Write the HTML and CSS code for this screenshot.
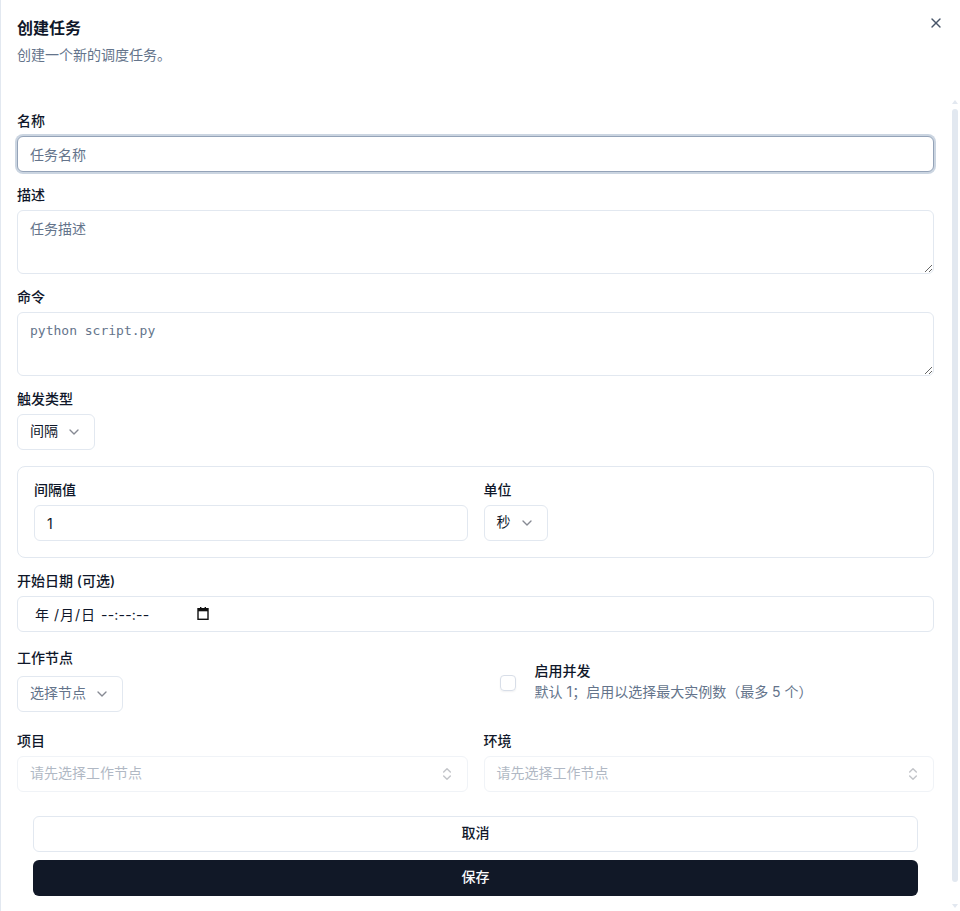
FILE: index.html
```html
<!DOCTYPE html>
<html lang="zh-CN">
<head>
<meta charset="utf-8">
<title>创建任务</title>
<link rel="stylesheet" href="styles.css">
</head>
<body>
<div class="dialog" role="dialog" aria-labelledby="dlg-title">
  <header class="dialog-header">
    <div class="heading">
      <h2 id="dlg-title" class="title">创建任务</h2>
      <p class="subtitle">创建一个新的调度任务。</p>
    </div>
    <button class="close" type="button" aria-label="关闭">
      <svg width="16" height="16" viewBox="0 0 24 24" fill="none" stroke="currentColor" stroke-width="2" stroke-linecap="round" stroke-linejoin="round"><path d="M18 6 6 18"/><path d="m6 6 12 12"/></svg>
    </button>
  </header>

  <div class="dialog-body">
    <div class="scroll-view">
      <form class="form">
        <div class="field">
          <label class="label" for="name">名称</label>
          <input id="name" class="input is-focused" type="text" placeholder="任务名称" autofocus>
        </div>

        <div class="field">
          <label class="label" for="desc">描述</label>
          <textarea id="desc" class="textarea" placeholder="任务描述"></textarea>
        </div>

        <div class="field">
          <label class="label" for="cmd">命令</label>
          <textarea id="cmd" class="textarea mono" placeholder="python script.py"></textarea>
        </div>

        <div class="field">
          <span class="label">触发类型</span>
          <button type="button" class="select">
            <span>间隔</span>
            <svg class="chev" width="16" height="16" viewBox="0 0 24 24" fill="none" stroke="currentColor" stroke-width="2" stroke-linecap="round" stroke-linejoin="round"><path d="m6 9 6 6 6-6"/></svg>
          </button>
        </div>

        <div class="card">
          <div class="field">
            <label class="label" for="interval">间隔值</label>
            <input id="interval" class="input" type="text" value="1">
          </div>
          <div class="field">
            <span class="label">单位</span>
            <button type="button" class="select">
              <span>秒</span>
              <svg class="chev" width="16" height="16" viewBox="0 0 24 24" fill="none" stroke="currentColor" stroke-width="2" stroke-linecap="round" stroke-linejoin="round"><path d="m6 9 6 6 6-6"/></svg>
            </button>
          </div>
        </div>

        <div class="field">
          <span class="label">开始日期 (可选)</span>
          <div class="input date">
            <span class="date-part">年</span><span class="date-sep"> /</span><span class="date-part">月</span><span class="date-sep">/</span><span class="date-part">日</span><span class="date-time">--:--:--</span>
            <svg class="cal" width="12" height="13" viewBox="0 0 12 13"><rect x="1" y="1.7" width="10" height="10.6" fill="none" stroke="#111" stroke-width="1.4"/><rect x="1" y="1.7" width="10" height="2.6" fill="#111"/><rect x="3" y="0" width="1.4" height="2" fill="#111"/><rect x="7.6" y="0" width="1.4" height="2" fill="#111"/></svg>
          </div>
        </div>

        <div class="row">
          <div class="field">
            <span class="label tall">工作节点</span>
            <button type="button" class="select muted">
              <span>选择节点</span>
              <svg class="chev" width="16" height="16" viewBox="0 0 24 24" fill="none" stroke="currentColor" stroke-width="2" stroke-linecap="round" stroke-linejoin="round"><path d="m6 9 6 6 6-6"/></svg>
            </button>
          </div>
          <div class="toggle">
            <span class="checkbox" role="checkbox" aria-checked="false"></span>
            <div class="toggle-text">
              <span class="toggle-title">启用并发</span>
              <span class="toggle-desc">默认 1；启用以选择最大实例数（最多 5 个）</span>
            </div>
          </div>
        </div>

        <div class="row">
          <div class="field">
            <span class="label">项目</span>
            <button type="button" class="select wide" disabled>
              <span>请先选择工作节点</span>
              <svg class="chev" width="16" height="16" viewBox="0 0 24 24" fill="none" stroke="currentColor" stroke-width="2" stroke-linecap="round" stroke-linejoin="round"><path d="m7 15 5 5 5-5"/><path d="m7 9 5-5 5 5"/></svg>
            </button>
          </div>
          <div class="field">
            <span class="label">环境</span>
            <button type="button" class="select wide" disabled>
              <span>请先选择工作节点</span>
              <svg class="chev" width="16" height="16" viewBox="0 0 24 24" fill="none" stroke="currentColor" stroke-width="2" stroke-linecap="round" stroke-linejoin="round"><path d="m7 15 5 5 5-5"/><path d="m7 9 5-5 5 5"/></svg>
            </button>
          </div>
        </div>

        <div class="actions">
          <button type="button" class="btn btn-outline">取消</button>
          <button type="submit" class="btn btn-primary">保存</button>
        </div>
      </form>
    </div>

    <div class="scrollbar" aria-hidden="true">
      <span class="sb-arrow sb-up"></span>
      <span class="sb-thumb"></span>
      <span class="sb-arrow sb-down"></span>
    </div>
  </div>
</div>
</body>
</html>
```

FILE: styles.css
```css
* {
  box-sizing: border-box;
}

html, body {
  margin: 0;
  height: 100%;
  background: #ffffff;
}

body {
  font-family: "Inter", "Noto Sans CJK SC", sans-serif;
  color: #0f172a;
  font-size: 14px;
}

.dialog {
  height: 911px;
  display: flex;
  flex-direction: column;
  border-left: 1px solid #e2e8f0;
  background: #ffffff;
  overflow: hidden;
}

/* header */
.dialog-header {
  display: flex;
  justify-content: space-between;
  align-items: flex-start;
  padding: 16px 16px 32px 16px;
  flex: none;
}

.title {
  margin: 0;
  font-size: 16px;
  line-height: 24px;
  font-weight: 700;
}

.subtitle {
  margin: 5px 0 0;
  font-size: 14px;
  line-height: 20px;
  color: #64748b;
}

.close {
  margin-top: -1px;
  width: 16px;
  height: 16px;
  padding: 0;
  border: 0;
  background: none;
  color: #475569;
  display: flex;
  cursor: pointer;
}

/* scrolling body: content column + slim scrollbar rail */
.dialog-body {
  flex: 1;
  min-height: 0;
  display: flex;
  overflow: hidden;
}

.scroll-view {
  flex: 1;
  min-width: 0;
  overflow: hidden;
  padding: 17px 15px 0 16px;
}

.scrollbar {
  flex: none;
  width: 11px;
  display: flex;
  flex-direction: column;
  align-items: center;
  padding: 3px 0 3px;
}

.sb-arrow {
  width: 0;
  height: 0;
  border-left: 3px solid transparent;
  border-right: 3px solid transparent;
}

.sb-up {
  border-bottom: 4px solid #e2e8f0;
}

.sb-down {
  margin-top: auto;
  border-top: 4px solid #e2e8f0;
}

.sb-thumb {
  margin-top: 5px;
  width: 6px;
  height: 773px;
  border-radius: 3px;
  background: #e2e8f0;
}

.form {
  display: flex;
  flex-direction: column;
  gap: 16px;
}

.field {
  display: flex;
  flex-direction: column;
  gap: 8px;
  min-width: 0;
}

.label {
  font-size: 14px;
  line-height: 14px;
  font-weight: 500;
  color: #0f172a;
}

.label.tall {
  line-height: 20px;
}

.input {
  height: 36px;
  width: 100%;
  border: 1px solid #e2e8f0;
  border-radius: 6px;
  padding: 0 12px;
  font: inherit;
  font-size: 14px;
  color: #0f172a;
  background: #ffffff;
  outline: none;
}

.input::placeholder,
.textarea::placeholder {
  color: #64748b;
  opacity: 1;
}

.input.is-focused {
  border-color: #94a3b8;
  box-shadow: 0 0 0 2px #cbd5e1;
}

.textarea {
  height: 64px;
  width: 100%;
  border: 1px solid #e2e8f0;
  border-radius: 6px;
  padding: 8px 12px;
  font: inherit;
  font-size: 14px;
  line-height: 20px;
  color: #0f172a;
  background: #ffffff;
  outline: none;
  resize: vertical;
  display: block;
}

.textarea.mono {
  font-family: "DejaVu Sans Mono", monospace;
  font-size: 13px;
}

/* select trigger */
.select {
  align-self: flex-start;
  height: 36px;
  display: inline-flex;
  align-items: center;
  gap: 8px;
  padding: 0 12px 2px;
  border: 1px solid #e2e8f0;
  border-radius: 6px;
  background: #ffffff;
  font: inherit;
  font-size: 14px;
  line-height: 20px;
  color: #0f172a;
  cursor: pointer;
}

.select .chev {
  margin-top: 2px;
}

.select.muted span {
  color: #64748b;
}

.select .chev {
  opacity: 0.5;
  flex: none;
}

.select.wide {
  align-self: stretch;
  justify-content: space-between;
}

.select.wide span {
  color: #64748b;
}

.select:disabled {
  opacity: 0.5;
  cursor: not-allowed;
}

/* interval card */
.card {
  border: 1px solid #e2e8f0;
  border-radius: 8px;
  padding: 16px;
  display: grid;
  grid-template-columns: 1fr 1fr;
  gap: 16px;
}

/* date-time field */
.date {
  display: flex;
  align-items: center;
  padding-left: 17px;
}

.date-sep {
  white-space: pre;
  margin: 0 1px;
}

.date-time {
  margin-left: 6px;
  letter-spacing: 0.2px;
}

.cal {
  margin-left: 48px;
  margin-top: -1px;
}

/* two-column rows */
.row {
  display: grid;
  grid-template-columns: 1fr 1fr;
  gap: 16px;
  align-items: start;
}

.toggle {
  display: flex;
  align-items: center;
  gap: 19px;
  padding: 16px;
}

.checkbox {
  width: 16px;
  height: 16px;
  border: 1px solid #d8dee8;
  border-radius: 4px;
  box-shadow: 0 1px 2px rgba(15, 23, 42, 0.06);
  flex: none;
}

.toggle-text {
  display: flex;
  flex-direction: column;
  gap: 4px;
}

.toggle-title {
  font-weight: 500;
  line-height: 14px;
}

.toggle-desc {
  line-height: 20px;
  color: #64748b;
}

/* footer buttons */
.actions {
  display: flex;
  flex-direction: column;
  gap: 8px;
  padding: 8px 16px 35px;
}

.btn {
  height: 36px;
  border-radius: 6px;
  font: inherit;
  font-size: 14px;
  font-weight: 500;
  line-height: 20px;
  padding: 0 0 3px;
  cursor: pointer;
}

.btn-outline {
  border: 1px solid #e2e8f0;
  background: #ffffff;
  color: #0f172a;
}

.btn-primary {
  border: 0;
  background: #111827;
  color: #f8fafc;
}
```
